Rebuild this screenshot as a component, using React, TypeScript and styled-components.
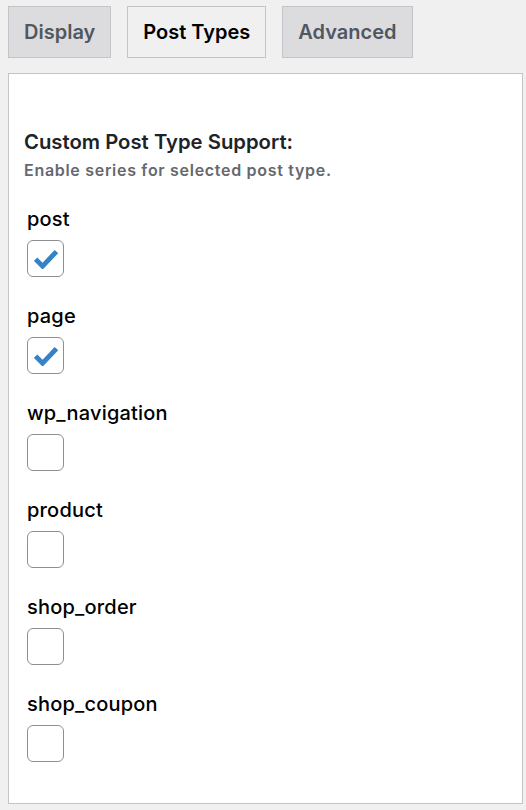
import React, { useState } from 'react';
import styled, { createGlobalStyle } from 'styled-components';

const GlobalStyle = createGlobalStyle`
  html, body {
    margin: 0;
    padding: 0;
    background: #f0f0f1;
  }
  body {
    font-family: Inter, "Noto Sans", "Liberation Sans", sans-serif;
    color: #1d2327;
  }
`;

const tabs = ['Display', 'Post Types', 'Advanced'];

const postTypes = [
  { name: 'post', checked: true },
  { name: 'page', checked: true },
  { name: 'wp_navigation', checked: false },
  { name: 'product', checked: false },
  { name: 'shop_order', checked: false },
  { name: 'shop_coupon', checked: false },
];

const Page = styled.div`
  padding: 6px 3px 6px 8px;
  width: 526px;
  box-sizing: border-box;
`;

const TabBar = styled.div`
  display: flex;
  gap: 16px;
  margin-bottom: 15px;
`;

const Tab = styled.button<{ $active: boolean }>`
  height: 52px;
  box-sizing: border-box;
  padding: 0 15px;
  border: 1px solid #c3c4c7;
  background: ${(p) => (p.$active ? '#f0f0f1' : '#dcdcde')};
  color: ${(p) => (p.$active ? '#000' : '#50575e')};
  font-family: inherit;
  font-size: 20px;
  font-weight: 600;
  cursor: pointer;
`;

const Panel = styled.div`
  background: #fff;
  border: 1px solid #c3c4c7;
  padding: 55px 15px 39px 15px;
  height: 731px;
  box-sizing: border-box;
`;

const Title = styled.h3`
  margin: 0;
  font-size: 20.3px;
  font-weight: 600;
  line-height: 26px;
  color: #1d2327;
`;

const Hint = styled.p`
  margin: 5px 0 0;
  font-size: 16px;
  font-weight: 600;
  letter-spacing: 0.7px;
  line-height: 20px;
  color: #646970;
`;

const List = styled.div`
  display: flex;
  flex-direction: column;
  gap: 27px;
  margin: 27px 0 0 3px;
`;

const Item = styled.label`
  display: flex;
  flex-direction: column;
  align-items: flex-start;
  gap: 9px;
  cursor: pointer;
`;

const ItemName = styled.span`
  font-size: 20px;
  font-weight: 500;
  letter-spacing: 0.2px;
  line-height: 24px;
  color: #000;
`;

const Box = styled.span<{ $checked: boolean }>`
  width: 37px;
  height: 37px;
  box-sizing: border-box;
  border: 1.5px solid #8c8f94;
  border-radius: 6px;
  background: #fff;
  display: flex;
  align-items: center;
  justify-content: center;
`;

const Check = () => (
  <svg width="24" height="20" viewBox="0 0 24 20">
    <polyline
      points="1.6,10.2 8.6,17.2 22.4,2.6"
      fill="none"
      stroke="#3582c4"
      strokeWidth="4.8"
      strokeLinejoin="miter"
    />
  </svg>
);

export default function App() {
  const [active, setActive] = useState('Post Types');
  const [items, setItems] = useState(postTypes);

  const toggle = (name: string) =>
    setItems((prev) =>
      prev.map((i) => (i.name === name ? { ...i, checked: !i.checked } : i))
    );

  return (
    <>
      <GlobalStyle />
      <Page>
        <TabBar>
          {tabs.map((t) => (
            <Tab key={t} $active={t === active} onClick={() => setActive(t)}>
              {t}
            </Tab>
          ))}
        </TabBar>
        <Panel>
          <Title>Custom Post Type Support:</Title>
          <Hint>Enable series for selected post type.</Hint>
          <List>
            {items.map((i) => (
              <Item
                key={i.name}
                onClick={(e) => {
                  e.preventDefault();
                  toggle(i.name);
                }}
              >
                <ItemName>{i.name}</ItemName>
                <Box $checked={i.checked}>{i.checked && <Check />}</Box>
              </Item>
            ))}
          </List>
        </Panel>
      </Page>
    </>
  );
}
